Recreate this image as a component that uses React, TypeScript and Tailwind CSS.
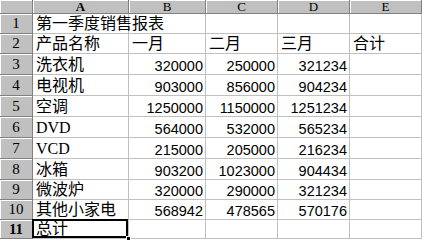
import React from 'react';

const cjk = "font-['Liberation_Serif','Noto_Sans_CJK_SC',serif]";
const num = "font-['Liberation_Sans',Arial,sans-serif]";

type Row = { h: string; a: string; b?: string; c?: string; d?: string; e?: string };

const rows: Row[] = [
  { h: 'h-[20px]', a: '第一季度销售报表' },
  { h: 'h-[20px]', a: '产品名称', b: '一月', c: '二月', d: '三月', e: '合计' },
  { h: 'h-[21px]', a: '洗衣机', b: '320000', c: '250000', d: '321234' },
  { h: 'h-[21px]', a: '电视机', b: '903000', c: '856000', d: '904234' },
  { h: 'h-[21px]', a: '空调', b: '1250000', c: '1150000', d: '1251234' },
  { h: 'h-[21px]', a: 'DVD', b: '564000', c: '532000', d: '565234' },
  { h: 'h-[21px]', a: 'VCD', b: '215000', c: '205000', d: '216234' },
  { h: 'h-[21px]', a: '冰箱', b: '903200', c: '1023000', d: '904434' },
  { h: 'h-[20px]', a: '微波炉', b: '320000', c: '290000', d: '321234' },
  { h: 'h-[20px]', a: '其他小家电', b: '568942', c: '478565', d: '570176' },
  { h: 'h-[19px]', a: '总计' },
];

const isNum = (v?: string) => !!v && /^\d+$/.test(v);

const Cell = ({ v }: { v?: string }) => (
  <div
    className={`flex items-end overflow-visible whitespace-nowrap border-r border-b border-[#c0c0c0] pb-[1px] ${
      isNum(v) ? `justify-end pr-[2px] text-[14.5px] ${num}` : `pl-[3px] text-[16px] ${cjk}`
    } leading-none text-black`}
  >
    {v}
  </div>
);

const colHeads = ['A', 'B', 'C', 'D', 'E'];

export default function App() {
  return (
    <div className="h-[244px] w-[423px] overflow-hidden bg-white">
      <div className="grid grid-cols-[33px_96px_77px_72px_72px_72px]">
        {/* corner + column headers */}
        <div className="h-[14px] border-r border-b border-[#808080] bg-[#c0c0c0] shadow-[inset_1px_1px_0_#fff]" />
        {colHeads.map((c) => (
          <div
            key={c}
            className={`flex h-[14px] items-center justify-center border-r border-b border-[#808080] bg-[#c0c0c0] shadow-[inset_1px_1px_0_#fff] text-[13px] leading-none text-black font-['Liberation_Serif',serif] ${
              c === 'A' ? 'font-bold' : ''
            }`}
          >
            {c}
          </div>
        ))}

        {rows.map((r, i) => (
          <React.Fragment key={i}>
            <div
              className={`flex ${r.h} items-center justify-center border-r border-b border-[#808080] bg-[#c0c0c0] shadow-[inset_1px_1px_0_#fff] text-[15px] leading-none text-black font-['Liberation_Serif',serif] ${
                i === 10 ? 'font-bold' : ''
              }`}
            >
              {i + 1}
            </div>
            {i === 10 ? (
              <div className={`relative flex items-end border-r border-b border-[#c0c0c0] pb-[1px] pl-[3px] text-[16px] leading-none ${cjk}`}>
                {r.a}
                <div className="pointer-events-none absolute -top-[1px] -left-[1px] -right-[0px] -bottom-[0px] border-2 border-black" />
                <div className="absolute -right-[3px] -bottom-[3px] h-[5px] w-[5px] border border-white bg-black" />
              </div>
            ) : (
              <Cell v={r.a} />
            )}
            <Cell v={r.b} />
            <Cell v={r.c} />
            <Cell v={r.d} />
            <Cell v={r.e} />
          </React.Fragment>
        ))}
      </div>
    </div>
  );
}
